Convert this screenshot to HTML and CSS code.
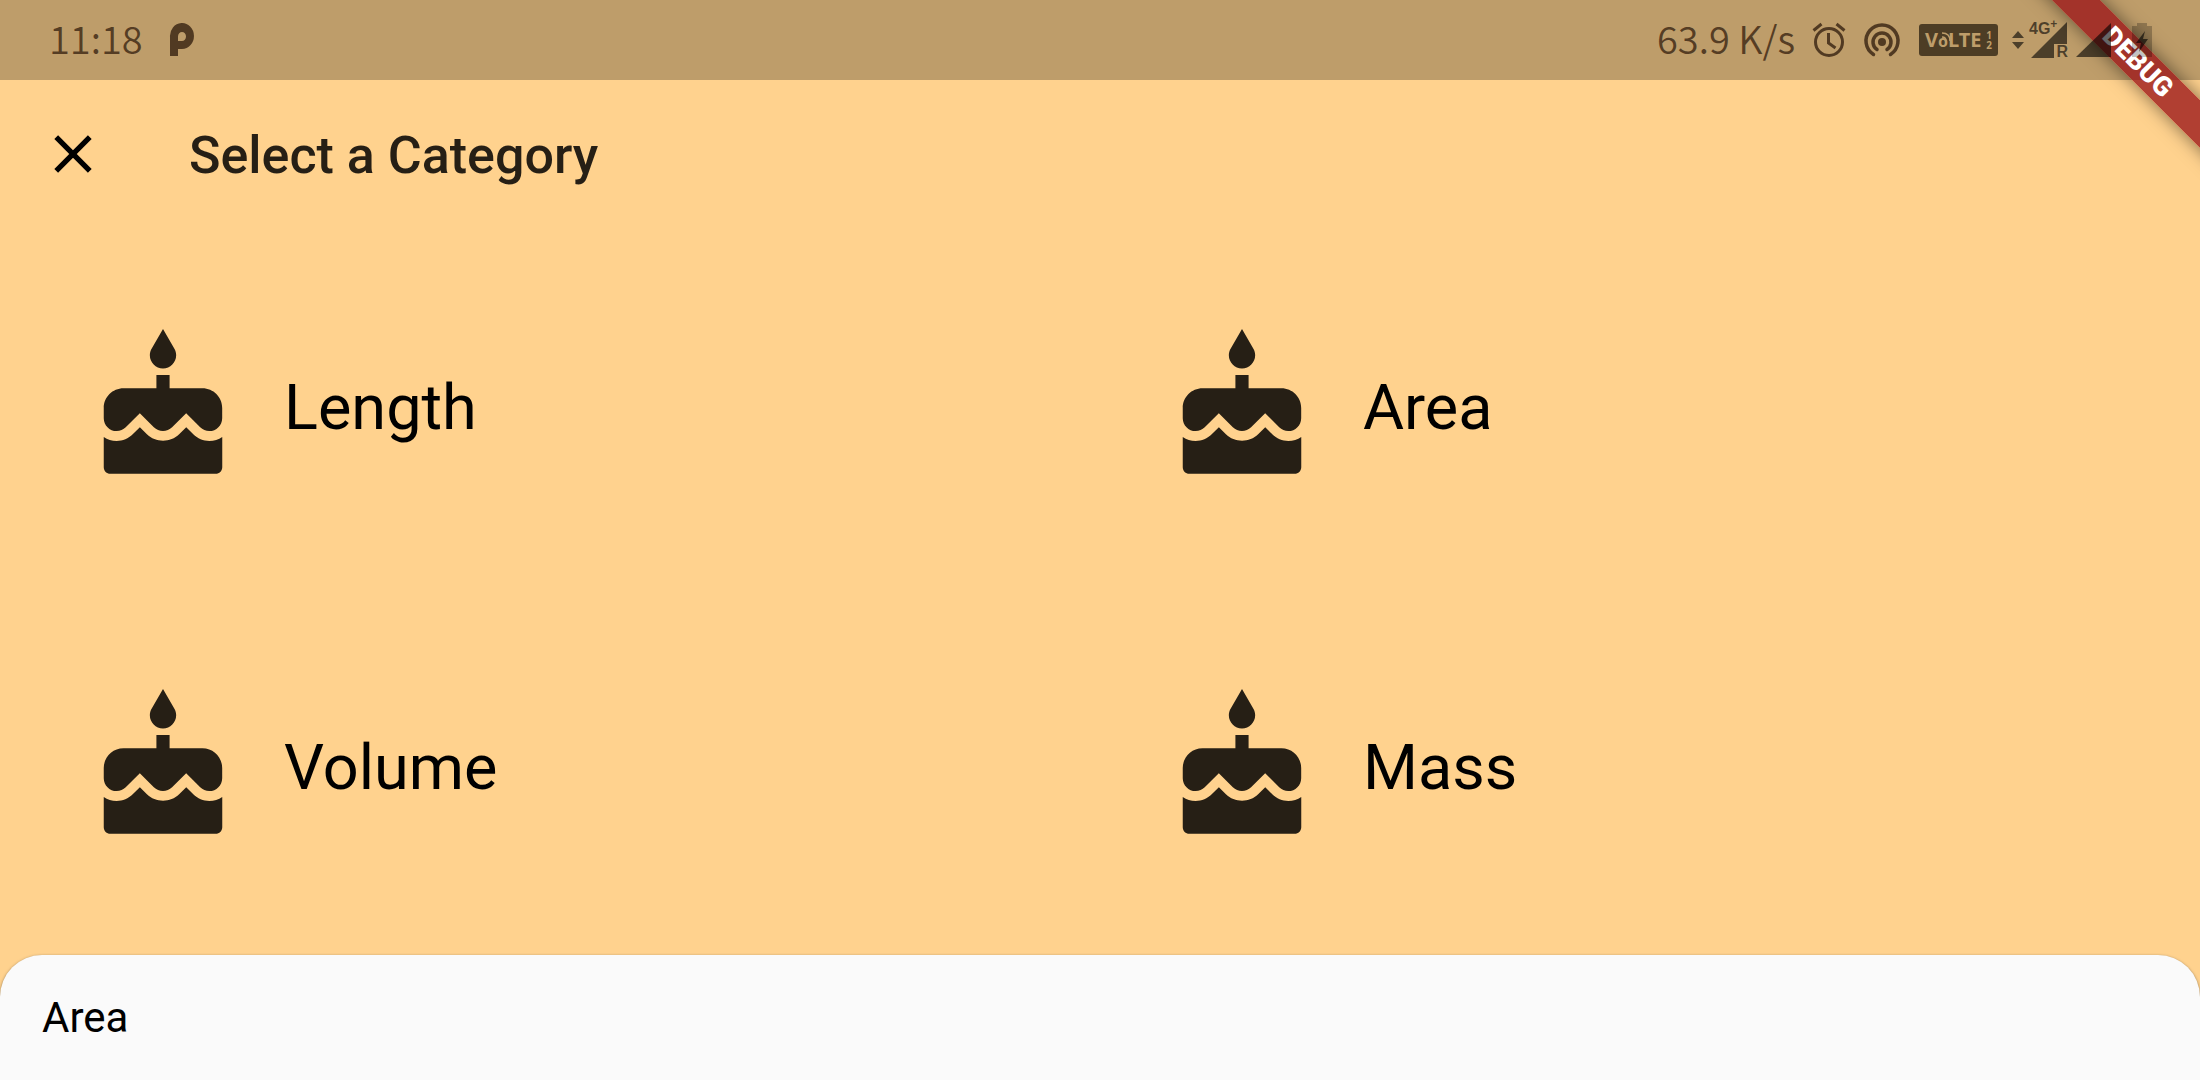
FILE: index.html
```html
<!DOCTYPE html>
<html lang="en">
<head>
<meta charset="utf-8">
<meta name="viewport" content="width=device-width, initial-scale=1">
<title>Select a Category</title>
<link rel="stylesheet" href="styles.css">
</head>
<body>
<svg class="sprite" aria-hidden="true">
  <symbol id="cake" viewBox="0 0 24 24"><path d="M12 6c1.11 0 2-.9 2-2 0-.38-.1-.73-.29-1.03L12 0l-1.71 2.97c-.19.3-.29.65-.29 1.03 0 1.1.9 2 2 2zm4.6 9.99l-1.07-1.07-1.08 1.07c-1.3 1.3-3.58 1.31-4.89 0l-1.07-1.07-1.09 1.07C6.75 16.64 5.88 17 4.96 17c-.73 0-1.4-.23-1.96-.61V21c0 .55.45 1 1 1h16c.55 0 1-.45 1-1v-4.61c-.56.38-1.23.61-1.96.61-.92 0-1.79-.36-2.44-1.01zM18 9h-5V7h-2v2H6c-1.66 0-3 1.34-3 3v1.54c0 1.08.88 1.96 1.96 1.96.52 0 1.02-.2 1.38-.57l2.14-2.13 2.13 2.13c.74.74 2.03.74 2.77 0l2.14-2.13 2.13 2.13c.37.37.86.57 1.38.57 1.08 0 1.96-.88 1.96-1.96V12c0-1.66-1.34-3-3-3z"/></symbol>
</svg>
<div class="screen">
  <div class="status">
    <span class="clock">11:18</span>
    <svg class="ico-p" width="26" height="34" viewBox="0 0 26 34" aria-label="Notification"><path fill-rule="evenodd" d="M1 33V14A12 13 0 1 1 13 26H9V33ZM9 18H13A4 4.500 0 1 0 9 13.500Z"/></svg>
    <span class="speed">63.9 K/s</span>
    <svg class="ico-alarm" width="34" height="36" viewBox="0 0 34 36" aria-label="Alarm"><g fill="none" stroke="currentColor" stroke-width="3"><circle cx="17" cy="20" r="13.500"/><path d="M16.500 11v10l7 5M1.500 8.500l8-6.500M32.500 8.500l-8-6.500"/></g></svg>
    <svg class="ico-cast" width="38" height="36" viewBox="0 0 38 36" aria-label="Hotspot"><circle cx="19" cy="20" r="4"/><g fill="none" stroke="currentColor" stroke-width="3.500" stroke-linecap="round"><path d="M10.500 32.500A16 16 0 1 1 27.500 32.500"/><path d="M14 27.500A9 9 0 1 1 24 27.500"/></g></svg>
    <span class="volte"><span>V<span class="small-o">o</span>LTE</span>
      <svg class="waves" width="10" height="10" viewBox="0 0 10 10" aria-hidden="true"><path d="M1 5q4 0 4 4M1 1q8 0 8 8" fill="none" stroke="currentColor" stroke-width="1.500"/></svg>
      <span class="sims"><span>1</span><span>2</span></span></span>
    <svg class="ico-arrows" width="12" height="18" viewBox="0 0 12 18" aria-hidden="true"><path d="M0 7L6 0l6 7ZM0 11l6 7 6-7Z"/></svg>
    <span class="signal">
      <svg width="40" height="40" viewBox="0 0 40 40" aria-hidden="true"><path d="M3 38L39 2V24H26V38Z"/></svg>
      <span class="net">4G<sup>+</sup></span><span class="roam">R</span>
    </span>
    <svg class="ico-signal" width="35" height="34" viewBox="0 0 35 34" aria-label="Signal"><path d="M0 34L35 0V34Z"/></svg>
    <svg class="ico-battery" width="20" height="34" viewBox="0 0 20 34" aria-label="Battery charging"><path opacity=".4" d="M5 0h10v3h5v31H0V3h5Z"/><path d="M13 8L4 20h5l-2 9 9-13h-5Z"/></svg>
  </div>
  <header class="appbar">
    <button class="close" type="button" aria-label="Close"><svg width="64" height="64" viewBox="0 0 24 24" aria-hidden="true"><path d="M19 6.410L17.590 5 12 10.590 6.410 5 5 6.410 10.590 12 5 17.590 6.410 19 12 13.410 17.590 19 19 17.590 13.410 12z"/></svg></button>
    <h1>Select a Category</h1>
  </header>
  <main class="grid">
    <button class="tile" type="button"><svg class="cake" aria-hidden="true"><use href="#cake"/></svg><span>Length</span></button>
    <button class="tile" type="button"><svg class="cake" aria-hidden="true"><use href="#cake"/></svg><span>Area</span></button>
    <button class="tile" type="button"><svg class="cake" aria-hidden="true"><use href="#cake"/></svg><span>Volume</span></button>
    <button class="tile" type="button"><svg class="cake" aria-hidden="true"><use href="#cake"/></svg><span>Mass</span></button>
  </main>
  <section class="sheet"><h2>Area</h2></section>
  <div class="debug"><span>DEBUG</span></div>
</div>
</body>
</html>
```
FILE: styles.css
```css
* { box-sizing: border-box; }
body { margin: 0; background: #ffd28e; color: #000; font-family: Roboto, sans-serif; }
button { border: 0; background: none; padding: 0; margin: 0; font: inherit; color: inherit; text-align: left; cursor: pointer; }
svg { display: block; fill: currentColor; flex: none; }
h1, h2 { margin: 0; }
.sprite { position: absolute; width: 0; height: 0; }
.screen { position: relative; display: flex; flex-direction: column; height: 100vh; overflow: hidden; }

/* The system icons are drawn above the ribbon, the bar's scrim below it. */
.status { display: flex; align-items: center; flex: none; height: 80px; padding: 0 48px; background: #be9d6a; color: rgba(30, 12, 0, .68); }
.status > * { position: relative; z-index: 2; }
.clock, .speed { padding-bottom: 4px; font-family: "Noto Sans CJK SC", "Noto Sans", sans-serif; font-weight: 350; font-size: 38px; line-height: 48px; white-space: nowrap; }
.clock { padding-left: 1px; }
.ico-p { margin-left: 26px; }
.speed { margin-left: auto; }
.ico-alarm { margin-left: 17px; }
.ico-cast { margin-left: 17px; }
.volte { display: flex; align-items: center; justify-content: space-between; width: 79px; height: 32px; margin-left: 18px; padding: 0 6px; border-radius: 3px; background: #4d3d25; color: #be9d6a; font: bold 20px/32px "Noto Sans", sans-serif; }
.small-o { font-size: 16px; }
.waves { position: absolute; left: 22px; top: 8px; }
.sims { display: flex; flex-direction: column; font-size: 10px; line-height: 10px; }
.ico-arrows { margin-left: 14px; }
.ico-arrows, .signal, .ico-signal, .ico-battery { color: rgba(0, 0, 0, .6); }
.signal { margin-left: 4px; }
.net { position: absolute; left: 1px; top: 1px; font: bold 16px/16px "Liberation Sans", sans-serif; white-space: nowrap; }
.net sup { font-size: 12px; line-height: 0; }
.roam { position: absolute; right: 0; bottom: 0; font: bold 16px/16px "Liberation Sans", sans-serif; }
.ico-signal { margin-left: 8px; }
.ico-battery { margin-left: 21px; }

.appbar { display: flex; align-items: center; flex: none; height: 148px; padding-left: 41px; }
.close { width: 64px; height: 64px; }
h1 { margin-left: 84px; padding-top: 3px; font-size: 52px; line-height: 64px; font-weight: 500; color: #261f15; }

.grid { display: grid; grid-template-columns: 1fr 1fr; grid-auto-rows: 360px; flex: 1; min-height: 0; overflow: hidden; padding: 0 21px; }
.tile { display: flex; align-items: center; gap: 42px; padding-left: 63px; font-size: 63px; line-height: 74px; }
.cake { width: 158px; height: 158px; color: #261f15; }

.sheet { position: relative; flex: none; padding: 38px 42px 37px; border-radius: 42px 42px 0 0; background: #fafafa; box-shadow: 0 1px 3px rgba(0, 0, 0, .5); }
h2 { font-size: 42px; line-height: 50px; font-weight: 400; }

.debug { position: absolute; right: -98px; top: 45px; width: 320px; height: 34px; transform: rotate(45deg); background: rgba(155, 22, 24, .78); box-shadow: 0 0 18px rgba(0, 0, 0, .5); text-align: center; color: #fff; font-size: 27px; line-height: 34px; font-weight: 900; }
```
